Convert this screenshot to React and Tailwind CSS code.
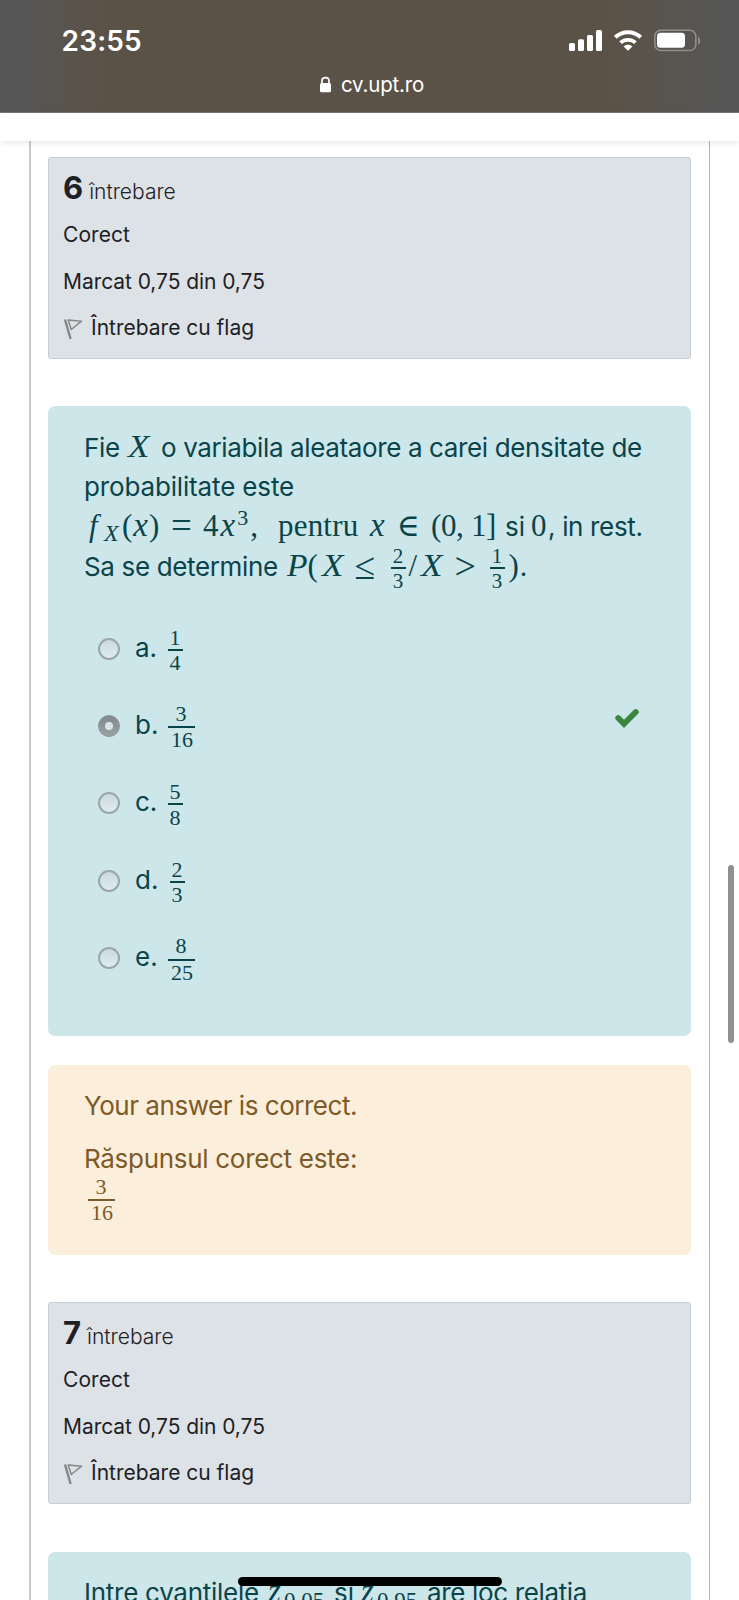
import React from "react";

const serif = "font-['Liberation_Serif',serif] text-[31px]";
const italic = "font-['Liberation_Serif',serif] text-[31px] italic";
const variable = "font-['Liberation_Serif',serif] text-[32px] italic";

function Cell({ w, className = "", children }) {
  return <span className={`block shrink-0 whitespace-pre leading-[40px] ${w} ${className}`}>{children}</span>;
}

function Fraction({ top, bottom, wide = false, className = "" }) {
  return (
    <span className={`flex shrink-0 flex-col items-center font-['Liberation_Serif',serif] text-[22px] leading-[22px] ${wide ? "w-[27px]" : "w-[15px]"} ${className}`}>
      <span className="block">{top}</span>
      <span className={`block h-[2px] w-full bg-current ${wide ? "mt-[1.5px]" : ""}`} />
      <span className={`block ${wide ? "mt-px pl-0.5" : "mt-[1.5px]"}`}>{bottom}</span>
    </span>
  );
}

function InlineFraction({ top, bottom }) {
  return (
    <span className="flex h-[40px] w-[15px] shrink-0 flex-col items-center self-start font-['Liberation_Serif',serif] text-[21px] leading-[21px]">
      <span className="block pt-[1.5px]">{top}</span>
      <span className="block h-[1.5px] w-full shrink-0 bg-current" />
      <span className="mt-[2px] block">{bottom}</span>
    </span>
  );
}

function FlagIcon() {
  return (
    <svg className="mt-[12px] h-[24px] w-[20px] shrink-0" viewBox="0 0 20 24" fill="none" stroke="#85888b" strokeLinejoin="round">
      <path d="M2 2.500 7.600 22" strokeWidth="2.400" />
      <path d="M5.200 3 18.500 4.200 8.200 12.500Z" strokeWidth="1.500" />
    </svg>
  );
}

function QuestionInfo({ number }) {
  return (
    <section className="h-[202px] rounded-[3px] border-[1.5px] border-[#c6ced4] bg-[#dde2e6] pl-[14px] pt-[6.5px] text-[21px] leading-[46px] text-[#1d2125]">
      <h3 className="flex h-[47px] items-baseline font-light">
        <span className="mr-[6px] text-[31px] font-bold">{number}</span>
        <span>întrebare</span>
      </h3>
      <div className="h-[47px] tracking-[0.05px]">Corect</div>
      <div className="h-[46.5px] tracking-[-0.06px]">Marcat 0,75 din 0,75</div>
      <div className="flex h-[46px]">
        <FlagIcon />
        <span className="ml-[8px]">Întrebare cu flag</span>
      </div>
    </section>
  );
}

function Radio({ checked }) {
  return checked ? (
    <span className="mt-[28px] flex size-[22px] shrink-0 items-center justify-center rounded-full border-[1.5px] border-[#8b9799] bg-linear-to-b from-[#80898b] to-[#9aa4a6]">
      <span className="size-[8px] rounded-full bg-[#dbe5e8]" />
    </span>
  ) : (
    <span className="mt-[27.5px] size-[22px] shrink-0 rounded-full border-2 border-[#9aa6aa] bg-linear-to-b from-[#cbd8dc] to-[#e0edf0]" />
  );
}

const answers = [
  { label: "a.", top: "1", bottom: "4" },
  { label: "b.", top: "3", bottom: "16", wide: true, checked: true },
  { label: "c.", top: "5", bottom: "8" },
  { label: "d.", top: "2", bottom: "3", shift: true },
  { label: "e.", top: "8", bottom: "25", wide: true },
];

function Check() {
  return (
    <svg className="ml-auto mr-[51.5px] mt-[19.5px] h-[22px] w-[26px]" viewBox="0 0 26 22" fill="none" stroke="#3a863f" strokeWidth="5.8" strokeLinecap="round">
      <path d="M4.200 11 10 16.800 21.800 5" />
    </svg>
  );
}

function Quantile({ index }) {
  return (
    <Cell w="w-[66px]" className={italic}>
      <span className="inline-block w-[16px] text-[33px] leading-none">z</span>
      <span className="align-[-6px] text-[23px] not-italic leading-none">{index}</span>
    </Cell>
  );
}

export default function App() {
  return (
    <div className="relative flex h-[1600px] w-[739px] flex-col overflow-hidden bg-white font-[Inter,sans-serif]">
      <header className="h-[113px] shrink-0 border-b border-[#777570] bg-linear-to-r from-[#565656] from-2% via-[#5b5247] via-14% to-[#5b5247] text-white">
        <div className="h-full bg-linear-to-r from-transparent from-82% to-[#565656] to-98%">
          <div className="flex h-[61px] items-start pl-[61.5px] pt-[25px]">
            <span className="text-[28px] font-semibold leading-[32px] tracking-[0.2px]">23:55</span>
            <svg className="ml-auto mr-[37px] mt-[3px] h-[26px] w-[134px]" viewBox="0 0 134 26" fill="#fff">
              <rect x="1" y="15" width="6" height="8" rx="1.600" />
              <rect x="10" y="11.300" width="6" height="11.700" rx="1.600" />
              <rect x="19" y="7" width="6" height="16" rx="1.600" />
              <rect x="28" y="2" width="6" height="21" rx="1.600" />
              <path d="M60 22.800 55.600 18.400C58 16.200 62 16.200 64.400 18.400Z" />
              <path d="M52.500 14.700C56.600 10.900 63.400 10.900 67.500 14.700" fill="none" stroke="#fff" strokeWidth="3.700" />
              <path d="M47.300 9.300C54.400 2.500 65.600 2.500 72.700 9.300" fill="none" stroke="#fff" strokeWidth="4" />
              <rect x="86.800" y="2.300" width="41" height="20.200" rx="6" fill="none" stroke="#918d87" strokeWidth="1.600" />
              <rect x="89" y="4.800" width="28" height="15" rx="3.500" />
              <path d="M130 9v7.500c3-1 3-6.500 0-7.500Z" fill="#918d87" />
            </svg>
          </div>
          <div className="flex h-[46px] items-start pl-[319px]">
            <svg className="mt-[15px] h-[17px] w-[13px]" viewBox="0 0 13 17">
              <rect x="1" y="7" width="11" height="9.200" rx="1.500" fill="#fff" />
              <path d="M3 8V5C3 .6 10 .6 10 5V8" fill="none" stroke="#fff" strokeWidth="1.700" />
            </svg>
            <span className="ml-[9px] mt-[11px] text-[20.5px] leading-[25px] tracking-[-0.2px]">cv.upt.ro</span>
          </div>
        </div>
      </header>

      <div className="z-10 h-[28px] shrink-0 bg-white shadow-[0_2px_6px_rgba(0,0,0,0.09)]" />

      <main className="ml-[29px] w-[681px] shrink-0 border-l-2 border-r-[1.5px] border-l-[#cacaca] border-r-[#b0b0b0] pl-[17px] pr-[18px] pt-[16px]">
        <QuestionInfo number="6" />

        <section className="mt-[47px] h-[630px] rounded-[7px] bg-[#cde6e9] pt-[19.5px] text-[26px] text-[#0a444b]">
          <p className="flex h-[40px] items-baseline pl-[36px]">
            <Cell w="w-[44px]" className="tracking-[-0.3px]">Fie</Cell>
            <Cell w="w-[33px]" className={variable}><span className="inline-block origin-left scale-x-110">X</span></Cell>
            <Cell w="w-[490px]" className="tracking-[-0.37px]">o variabila aleataore a carei densitate de</Cell>
          </p>
          <p className="h-[39px] pl-[36px] pt-px leading-[40px] tracking-[-0.15px]">probabilitate este</p>
          <p className="flex h-[41px] items-baseline pl-[41px]">
            <Cell w="w-[15px]" className={italic}>f</Cell>
            <Cell w="w-[18px]" className={italic}><span className="align-[-5px] text-[24px] leading-none">X</span></Cell>
            <Cell w="w-[49px]" className={`${serif} tracking-[1px]`}>(<span className="text-[33px] italic leading-none">x</span>)</Cell>
            <Cell w="w-[32px]" className={serif}><span className="align-[-2px] text-[37px] leading-none">=</span></Cell>
            <Cell w="w-[75px]" className={serif}>4<span className="pl-[2px] text-[33px] italic leading-none">x</span><span className="pl-[2px] align-[10.5px] text-[22px] leading-none">3</span><span className="pl-[2px]">,</span></Cell>
            <Cell w="w-[92px]" className={`${serif} tracking-[0.2px]`}>pentru</Cell>
            <Cell w="w-[27px]" className={italic}><span className="text-[33px] leading-none">x</span></Cell>
            <Cell w="w-[34px]" className="font-['DejaVu_Serif',serif] text-[31px]">∈</Cell>
            <Cell w="w-[74px]" className={`${serif} tracking-[-0.35px]`}>(0, 1]</Cell>
            <Cell w="w-[26px]">si</Cell>
            <Cell w="w-[17px]" className={serif}>0</Cell>
            <Cell w="w-[98px]" className="tracking-[-0.335px]">, in rest.</Cell>
          </p>
          <p className="-mt-px flex h-[42px] items-baseline pl-[36px]">
            <Cell w="w-[203px]" className="tracking-[-0.35px]">Sa se determine</Cell>
            <Cell w="w-[20.5px]" className={variable}><span className="inline-block origin-left scale-x-105">P</span></Cell>
            <Cell w="w-[14px]" className={serif}>(</Cell>
            <Cell w="w-[33px]" className={variable}><span className="inline-block origin-left scale-x-110">X</span></Cell>
            <Cell w="w-[36px]" className={serif}><span className="align-[-3px] text-[38px] leading-none">≤</span></Cell>
            <InlineFraction top="2" bottom="3" />
            <Cell w="w-[15px]" className={`${serif} pl-[3px]`}>/</Cell>
            <Cell w="w-[34px]" className={variable}><span className="inline-block origin-left scale-x-110">X</span></Cell>
            <Cell w="w-[35px]" className={serif}><span className="align-[-3px] text-[38px] leading-none">&gt;</span></Cell>
            <InlineFraction top="1" bottom="3" />
            <Cell w="w-[26px]" className={`${serif} pl-[4px]`}>)<span className="pl-[1px] font-[Inter,sans-serif] text-[26px] leading-none">.</span></Cell>
          </p>
          <div className="mt-[23.5px] flex flex-col">
            {answers.map((a) => (
              <div key={a.label} className="flex h-[77.4px] items-start pl-[50px]">
                <Radio checked={a.checked} />
                <span className="ml-[15px] mt-[17.5px] w-[32.5px] leading-[40px]">{a.label}</span>
                <Fraction top={a.top} bottom={a.bottom} wide={a.wide} className={a.shift ? "ml-[2px] mt-[16.5px]" : a.wide ? "mt-[15.5px]" : "mt-[16.5px]"} />
                {a.checked && <Check />}
              </div>
            ))}
          </div>
        </section>

        <section className="mt-[29px] h-[190px] rounded-[7px] bg-[#fbeedb] pl-[36px] pt-[21px] text-[26px] leading-[40px] text-[#7d5a29]">
          <p className="h-[52.5px] tracking-[-0.47px]">Your answer is correct.</p>
          <p className="h-[37px] tracking-[-0.3px]">Răspunsul corect este:</p>
          <Fraction top="3" bottom="16" wide className="ml-[3.5px]" />
        </section>

        <div className="mt-[47px]">
          <QuestionInfo number="7" />
        </div>

        <section className="mt-[48px] h-[60px] rounded-t-[7px] bg-[#cde6e9] pl-[36px] pt-[20px] text-[26px] text-[#0a444b]">
          <p className="flex h-[40px] items-baseline">
            <Cell w="w-[184px]" className="tracking-[-0.27px]">Intre cvantilele</Cell>
            <Quantile index="0,05" />
            <Cell w="w-[27px]">si</Cell>
            <Quantile index="0,95" />
            <Cell w="w-[165px]" className="tracking-[-0.35px]">are loc relatia</Cell>
          </p>
        </section>
      </main>

      <div className="absolute left-[728px] top-[865px] h-[178px] w-[5.5px] rounded-full bg-[#919191]" />
      <div className="absolute left-[237.5px] top-[1576.5px] z-20 h-[9px] w-[264px] rounded-full bg-black" />
    </div>
  );
}
